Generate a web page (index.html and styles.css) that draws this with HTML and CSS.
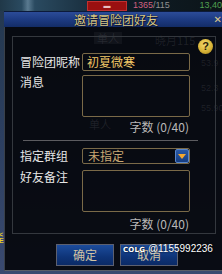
FILE: index.html
```html
<!DOCTYPE html>
<html lang="zh">
<head>
<meta charset="utf-8">
<title>邀请冒险团好友</title>
<link rel="stylesheet" href="styles.css">
</head>
<body>
<div class="scene-top">
  <div class="scene-left"></div>
  <div class="scene-red"><span class="red-mark">▬</span></div>
  <span class="scene-num">1365</span><span class="scene-num2">/115</span>
  <span class="scene-green">13,40</span>
</div>
<div class="scene-side"><span class="side-mark">&lt;<br>E</span></div>
<div class="dialog">
  <div class="titlebar">
    <span class="title">邀请冒险团好友</span>
    <span class="close">✕</span>
  </div>
  <div class="dialog-body">
    <div class="ghost ghost-a">单人</div>
    <div class="ghost ghost-b">晓月115</div>
    <div class="ghost ghost-c">53.9</div>
    <div class="ghost ghost-d">52.3</div>
    <div class="ghost ghost-e">55.90</div>
    <div class="ghost ghost-f">单人</div>
    <div class="panel">
      <span class="help">?</span>
      <div class="row row-name">
        <span class="label">冒险团昵称</span>
        <div class="input">初夏微寒</div>
      </div>
      <div class="row row-msg">
        <span class="label label-top">消息</span>
        <div class="textarea"></div>
      </div>
      <div class="count">字数 (0/40)</div>
      <div class="divider"></div>
      <div class="row row-group">
        <span class="label">指定群组</span>
        <div class="select">
          <span class="select-text">未指定</span>
          <span class="select-btn"><span class="tri"></span></span>
        </div>
      </div>
      <div class="row row-note">
        <span class="label label-top">好友备注</span>
        <div class="textarea"></div>
      </div>
      <div class="count count-2">字数 (0/40)</div>
    </div>
    <div class="footer">
      <button class="btn">确定</button>
      <button class="btn">取消</button>
    </div>
    <div class="watermark"><span class="colg">COLG</span> @1155992236</div>
  </div>
</div>
</body>
</html>
```
FILE: styles.css
```css
html, body {
  margin: 0;
  padding: 0;
}
body {
  width: 222px;
  height: 274px;
  overflow: hidden;
  position: relative;
  font-family: "Noto Sans CJK SC", "Noto Sans", sans-serif;
  font-size: 12px;
  background: linear-gradient(180deg, #24384e 0%, #2c3f60 50%, #3a4a70 100%);
}
.scene-top {
  height: 11px;
  display: flex;
  align-items: center;
  background: linear-gradient(90deg, #1e3a4c 0%, #2a5066 20%, #1c3c50 38%, #10202c 40%, #0c1418 100%);
  font-family: "Liberation Sans", sans-serif;
  font-size: 9px;
  line-height: 11px;
  overflow: hidden;
}
.scene-left {
  width: 87px;
  height: 11px;
  background: linear-gradient(90deg, #203848 0%, #2a4a60 25%, #5a7a90 32%, #2a4a60 40%, #1a3040 100%);
}
.scene-red {
  width: 40px;
  height: 10px;
  background: #9a1010;
  border: 1px solid #c03030;
  box-sizing: border-box;
  display: flex;
  justify-content: center;
  align-items: center;
}
.red-mark { color: #e8c0c0; font-size: 7px; }
.scene-num { color: #d06080; margin-left: 6px; }
.scene-num2 { color: #909090; }
.scene-green { color: #50a050; margin-left: auto; }
.scene-side {
  position: absolute;
  left: 0;
  top: 232px;
  width: 4px;
  overflow: hidden;
}
.side-mark {
  display: block;
  color: #e8d020;
  font-family: "Liberation Sans", sans-serif;
  font-size: 7px;
  line-height: 6px;
  font-weight: bold;
  margin-left: -1px;
}
.dialog {
  margin-left: 4px;
  width: 222px;
  height: 260px;
  background: rgba(4, 6, 10, 0.9);
  border-left: 1px solid #3a4048;
  border-bottom: 1px solid #5a5e66;
  box-sizing: border-box;
}
.titlebar {
  position: relative;
  height: 16px;
  margin-left: -1px;
  background: linear-gradient(180deg, #2c4c98 0%, #1e3c84 45%, #132c66 100%);
  border-top: 1px solid #0c1a3a;
  box-sizing: border-box;
  display: flex;
  justify-content: center;
  align-items: center;
}
.title {
  color: #d8c88c;
  font-size: 12px;
  line-height: 14px;
  margin-left: 2px;
  text-shadow: 0 0 1px #000, 1px 1px 0 #10183a;
}
.close {
  position: absolute;
  right: 4px;
  top: 1px;
  color: #d8c88c;
  font-size: 10px;
  line-height: 14px;
  font-family: "DejaVu Sans", sans-serif;
}
.dialog-body {
  position: relative;
  padding: 9px 0 0 7px;
}
.ghost {
  position: absolute;
  color: rgba(150, 150, 160, 0.16);
  font-size: 11px;
  line-height: 12px;
}
.ghost-a { left: 89px; top: 5px; background: rgba(80, 80, 90, 0.15); padding: 0 3px; }
.ghost-b { left: 150px; top: 7px; }
.ghost-c { left: 196px; top: 30px; font-family: "Liberation Sans", sans-serif; font-size: 9px; }
.ghost-d { left: 196px; top: 55px; font-family: "Liberation Sans", sans-serif; font-size: 9px; }
.ghost-e { left: 196px; top: 75px; font-family: "Liberation Sans", sans-serif; font-size: 9px; }
.ghost-f { left: 84px; top: 91px; }
.panel {
  position: relative;
  width: 204px;
  height: 198px;
  border: 1px solid #34383e;
  box-sizing: border-box;
  padding: 16px 0 0 7px;
}
.help {
  position: absolute;
  left: 185px;
  top: 2px;
  width: 15px;
  height: 15px;
  border-radius: 50%;
  background: radial-gradient(circle at 45% 35%, #f4dc70 0%, #d8b438 55%, #9a7a18 100%);
  color: #2a2008;
  font-family: "Liberation Sans", sans-serif;
  font-weight: bold;
  font-size: 11px;
  line-height: 15px;
  text-align: center;
}
.row {
  display: flex;
  align-items: center;
}
.label {
  width: 62px;
  flex: none;
  color: #e6e6e6;
  font-size: 12px;
  line-height: 18px;
  white-space: nowrap;
}
.label-top {
  align-self: flex-start;
  line-height: 14px;
}
.input {
  width: 108px;
  height: 18px;
  box-sizing: border-box;
  border: 1px solid #7a6a48;
  border-radius: 2px;
  color: #f2c868;
  padding-left: 4px;
  line-height: 16px;
  font-size: 12px;
}
.row-msg { margin-top: 4px; }
.textarea {
  width: 108px;
  height: 42px;
  box-sizing: border-box;
  border: 1px solid #7a6a48;
  border-radius: 2px;
}
.count {
  width: 169px;
  text-align: right;
  color: #b8b8b8;
  font-size: 12px;
  line-height: 15px;
  margin-top: 2px;
}
.count-2 { margin-top: 4px; }
.divider {
  margin: 6px 0 0 3px;
  width: 175px;
  height: 1px;
  background: #5c5c60;
}
.row-group { margin-top: 6px; }
.select {
  width: 108px;
  height: 16px;
  box-sizing: border-box;
  border: 1px solid #7a6a48;
  border-radius: 2px;
  display: flex;
  align-items: center;
}
.select-text {
  flex: 1;
  color: #c8a874;
  padding-left: 5px;
  line-height: 14px;
  font-size: 12px;
}
.select-btn {
  width: 14px;
  height: 14px;
  box-sizing: border-box;
  border: 1px solid #5a86c8;
  border-radius: 2px;
  background: linear-gradient(180deg, #2a5aa8 0%, #143c80 100%);
  display: flex;
  justify-content: center;
  align-items: center;
}
.tri {
  width: 0;
  height: 0;
  border-left: 4px solid transparent;
  border-right: 4px solid transparent;
  border-top: 5px solid #f4a830;
  margin-top: 1px;
}
.row-note { margin-top: 5px; }
.footer {
  display: flex;
  gap: 6px;
  margin-top: 10px;
  padding-left: 44px;
}
.btn {
  width: 58px;
  height: 22px;
  padding: 0;
  margin: 0;
  box-sizing: border-box;
  border: 1px solid #5c6070;
  background: linear-gradient(180deg, #1c4c9c 0%, #0e3478 60%, #0a2a66 100%);
  color: #d2c4a4;
  font-family: "Noto Sans CJK SC", sans-serif;
  font-size: 12px;
  line-height: 20px;
}
.watermark {
  position: absolute;
  left: 118px;
  top: 216px;
  color: #ffffff;
  font-family: "Liberation Sans", sans-serif;
  font-size: 10px;
  line-height: 12px;
  text-shadow: 0 0 2px #000;
  white-space: nowrap;
}
.colg {
  font-family: "DejaVu Sans", sans-serif;
  font-weight: bold;
  font-size: 7px;
  letter-spacing: 0.2px;
}
```
